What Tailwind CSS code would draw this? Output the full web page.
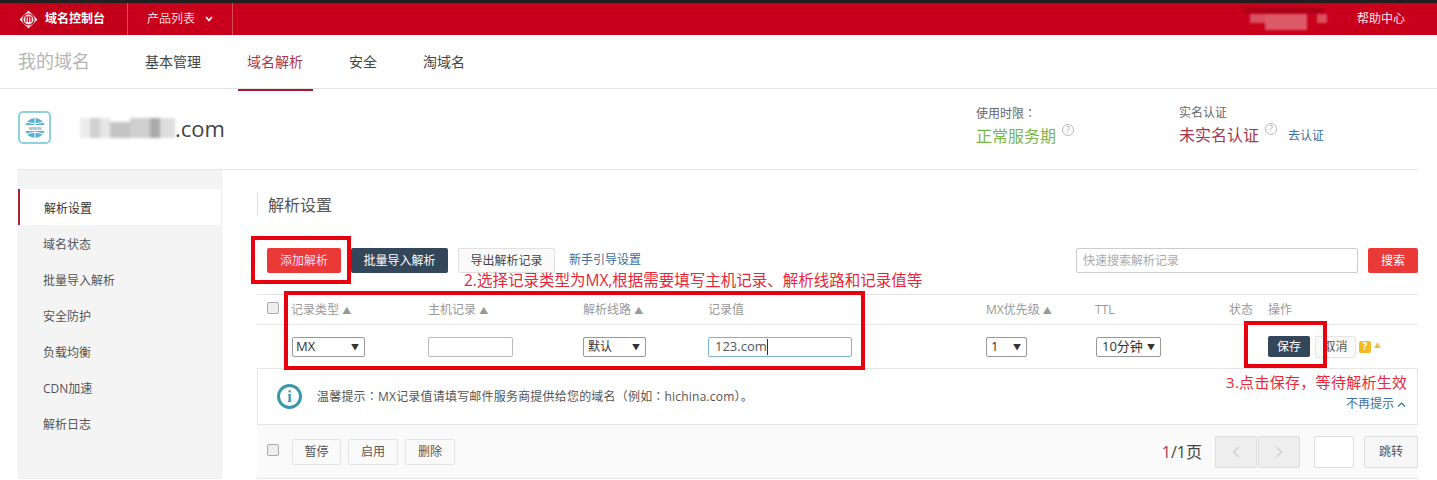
<!DOCTYPE html>
<html lang="en">
  <head>
    <meta charset="UTF-8" />
    <title>域名解析</title>
    <script src="https://cdn.jsdelivr.net/npm/@tailwindcss/browser@4"></script>
  </head>
  <body class="relative h-[480px] w-[1437px] overflow-hidden bg-white font-['Open_Sans','Noto_Sans_CJK_SC',sans-serif] text-[12px] text-[#555]">
    <!-- top bar -->
    <header class="flex h-[35px] border-t-[3px] border-[#231f20] bg-[#c9001c] text-white">
      <div class="ml-[18px] flex h-[32px] w-[109px] items-center gap-[7px] bg-[#c20019] pl-[1px] font-bold">
        <svg class="h-[19px] w-[19px]" viewBox="0 0 19 19">
          <path d="M9.5 0.5 18.5 9.5 9.5 18.5 0.5 9.5Z" fill="#f6e4e6" />
          <circle cx="9.5" cy="9.5" r="5.5" fill="#f6e4e6" stroke="#c20019" stroke-width="1.2" />
          <path d="M6.5 7h6M7 7v5M9.5 7v5M12 7v5" stroke="#c20019" stroke-width="1.2" fill="none" />
        </svg>
        <span class="text-[12px]">域名控制台</span>
      </div>
      <div class="flex w-[106px] items-center gap-[10px] border-x border-[#d9475a] pl-[19px] text-[#f7d5d9]">
        <span>产品列表</span>
        <svg class="h-[8px] w-[8px]" viewBox="0 0 8 8"><path d="M1 2 4 5.5 7 2" stroke="#fff" stroke-width="1.6" fill="none" /></svg>
      </div>
      <div class="ml-auto mr-[32px] flex items-center">
        <!-- blurred account name -->
        <div class="mr-[30px] flex h-[24px] w-[84px] items-start blur-[1px]">
          <div class="mt-[1px] h-[5px] w-[84px] bg-[#a80018]"></div>
          <div class="-ml-[74px] mt-[7px] h-[9px] w-[16px] bg-[#d9505f]"></div>
          <div class="mt-[7px] h-[16px] w-[44px] bg-[#dc5a68]"></div>
          <div class="ml-[10px] mt-[7px] h-[9px] w-[10px] bg-[#d9505f]"></div>
        </div>
        <span class="text-[#fbe3e6]">帮助中心</span>
      </div>
    </header>

    <!-- nav -->
    <nav class="flex h-[54px] items-center border-b border-[#e3e3e3] pl-[18px]">
      <span class="w-[127px] text-[18px] text-[#b5b5b5]">我的域名</span>
      <a class="text-[14px] text-[#444]">基本管理</a>
      <a class="relative ml-[46px] text-[14px] text-[#a8354c]">域名解析<span class="absolute -left-[9px] -bottom-[19px] h-[2px] w-[75px] bg-[#a8182f]"></span></a>
      <a class="ml-[46px] text-[14px] text-[#444]">安全</a>
      <a class="ml-[46px] text-[14px] text-[#444]">淘域名</a>
    </nav>

    <!-- domain info -->
    <section class="ml-[18px] mr-[19px] flex h-[81px] border-b border-[#e6e6e6]">
      <div class="mt-[22px] flex h-[33px] w-[33px] items-center justify-center rounded-[5px] border-2 border-[#8fd0e0]">
        <svg class="h-[22px] w-[22px]" viewBox="0 0 22 22">
          <circle cx="11" cy="11" r="10" fill="#5db0cf" />
          <path d="M11 1v20M3 5c5 2 11 2 16 0M3 17c5-2 11-2 16 0" stroke="#fff" stroke-width="1" fill="none" />
          <rect x="0" y="8" width="22" height="6" fill="#fff" />
          <text x="11" y="13" text-anchor="middle" font-size="6" font-family="Liberation Sans" fill="#3f8fae">www</text>
        </svg>
      </div>
      <div class="ml-[29px] mt-[26px] flex h-[26px] w-[145px] items-center">
        <!-- blurred domain name -->
        <div class="flex h-[20px] w-[95px] items-stretch blur-[1.5px]">
          <div class="w-[10px] bg-[#ececec]"></div>
          <div class="w-[10px] bg-[#d0d0d0]"></div>
          <div class="w-[10px] bg-[#e6e6e6]"></div>
          <div class="mt-[4px] w-[20px] bg-[#c4c4c4]"></div>
          <div class="w-[20px] bg-[#cfcfcf]"></div>
          <div class="w-[10px] bg-[#aaaaaa]"></div>
          <div class="w-[15px] bg-[#dddddd]"></div>
        </div>
        <span class="text-[22px] leading-none text-[#444]">.com</span>
      </div>
      <div class="ml-[751px] mt-[15px] w-[203px]">
        <p class="text-[12px] text-[#666]">使用时限<span class="font-['Noto_Sans_CJK_TC']">：</span></p>
        <p class="mt-[1px] flex items-start text-[16px] text-[#7ab648]">正常服务期<span class="ml-[6px] mt-0 flex h-[12px] w-[12px] items-center justify-center rounded-full border border-[#bbb] text-[9px] text-[#aaa]">?</span></p>
      </div>
      <div class="mt-[15px]">
        <p class="text-[12px] text-[#666]">实名认证</p>
        <p class="mt-[1px] flex items-start text-[16px] text-[#a8354c]">未实名认证<span class="ml-[6px] mt-0 flex h-[12px] w-[12px] items-center justify-center rounded-full border border-[#bbb] text-[9px] text-[#aaa]">?</span><a class="ml-[11px] mt-[4px] text-[12px] text-[#3b6e9e]">去认证</a></p>
      </div>
    </section>

    <div class="ml-[18px] mr-[19px] flex">
      <!-- sidebar -->
      <aside class="h-[309px] w-[204px] border-x border-b border-[#eee] bg-[#f4f4f4] pt-[19px]">
        <a class="-ml-px flex h-[36px] items-center border-l-2 border-[#b01e30] bg-white pl-[24px] pt-[4px] text-[#333]">解析设置</a>
        <a class="flex h-[36px] items-center pl-[24px] pt-[4px]">域名状态</a>
        <a class="flex h-[36px] items-center pl-[24px] pt-[4px]">批量导入解析</a>
        <a class="flex h-[36px] items-center pl-[24px] pt-[4px]">安全防护</a>
        <a class="flex h-[36px] items-center pl-[24px] pt-[4px]">负载均衡</a>
        <a class="flex h-[36px] items-center pl-[24px] pt-[4px]">CDN加速</a>
        <a class="flex h-[36px] items-center pl-[24px] pt-[4px]">解析日志</a>
      </aside>

      <!-- main -->
      <main class="flex-1 pl-[35px]">
        <h2 class="mt-[23px] h-[22px] border-l border-[#ddd] pl-[10px] text-[16px] leading-[24px] text-[#555]">解析设置</h2>

        <div class="mt-[33px] flex h-[25px] items-center">
          <button class="ml-[10px] h-[25px] w-[74px] rounded-[2px] bg-[#e93a37] text-[#fde]">添加解析</button>
          <button class="ml-[10px] h-[25px] w-[97px] rounded-[2px] bg-[#34465a] text-white">批量导入解析</button>
          <button class="ml-[10px] h-[25px] w-[97px] rounded-[2px] border border-[#e0e0e0] bg-[#fafafa] text-[#444]">导出解析记录</button>
          <a class="ml-[14px] -mt-[2px] text-[#3b6e9e]">新手引导设置</a>
          <div class="ml-auto flex h-[25px] w-[282px] items-center rounded-[2px] border border-[#ccc] pl-[6px] text-[#aaa]">快速搜索解析记录</div>
          <button class="ml-[10px] h-[25px] w-[50px] rounded-[2px] bg-[#e93a37] text-white">搜索</button>
        </div>

        <!-- table -->
        <div class="mt-[21px] flex h-[31px] items-center border-y border-[#e6e6e6] text-[12px] text-[#999]">
          <input type="checkbox" class="ml-[10px] -mt-[3px] h-[12px] w-[12px] appearance-none rounded-[2px] border border-[#aaa] bg-[#eee]" />
          <span class="ml-[12px] w-[137px]">记录类型 <span class="text-[9px]">▲</span></span>
          <span class="w-[155px]">主机记录 <span class="text-[9px]">▲</span></span>
          <span class="w-[125px]">解析线路 <span class="text-[9px]">▲</span></span>
          <span class="w-[278px]">记录值</span>
          <span class="w-[109px]">MX优先级 <span class="text-[9px]">▲</span></span>
          <span class="w-[134px]">TTL</span>
          <span class="w-[39px]">状态</span>
          <span>操作</span>
        </div>
        <div class="flex h-[44px] items-center border-b border-[#e6e6e6] text-[#333]">
          <div class="ml-[35px] flex h-[20px] w-[73px] items-center justify-between rounded-[2px] border border-[#999] pl-[3px] pr-[5px] text-[13px]">MX<span class="text-[8px]">▼</span></div>
          <div class="ml-[63px] h-[20px] w-[85px] rounded-[2px] border border-[#bbb]"></div>
          <div class="ml-[70px] flex h-[20px] w-[63px] items-center justify-between rounded-[2px] border border-[#999] pl-[4px] pr-[5px]">默认<span class="text-[8px]">▼</span></div>
          <div class="ml-[62px] flex h-[20px] w-[144px] items-center rounded-[2px] border border-[#7fb2d6] pl-[6px] text-[13px] text-[#555]">123.com<span class="h-[16px] w-px bg-[#333]"></span></div>
          <div class="ml-[134px] flex h-[20px] w-[41px] items-center justify-between rounded-[2px] border border-[#999] pl-[4px] pr-[5px] text-[13px]">1<span class="text-[8px]">▼</span></div>
          <div class="ml-[69px] flex h-[20px] w-[65px] items-center justify-between rounded-[2px] border border-[#999] px-[5px] text-[13px]">10分钟<span class="text-[8px]">▼</span></div>
          <button class="ml-[107px] h-[21px] w-[42px] rounded-[2px] bg-[#34465a] text-white">保存</button>
          <button class="ml-[5px] h-[22px] w-[41px] rounded-[2px] border border-[#e5e5e5] bg-[#fafafa] text-[#555]">取消</button>
          <span class="ml-[3px] flex h-[12px] w-[12px] items-center justify-center rounded-[2px] bg-[#f5b921] text-[10px] font-bold text-white">?</span>
          <span class="ml-[3px] text-[7px] text-[#e8c04a]">▲</span>
        </div>

        <!-- tip -->
        <div class="relative flex h-[56px] items-center border-x border-b border-[#e6e6e6] pl-[19px]">
          <span class="flex h-[25px] w-[25px] items-center justify-center rounded-full border-[3px] border-[#3a97ab] font-['Liberation_Serif'] text-[16px] font-bold text-[#3a97ab]">i</span>
          <span class="ml-[15px] tracking-[0.2px] text-[#555]">温馨提示<span class="font-['Noto_Sans_CJK_TC']">：</span>MX记录值请填写邮件服务商提供给您的域名（例如<span class="font-['Noto_Sans_CJK_TC']">：</span>hichina.com）。</span>
          <a class="absolute right-[11px] bottom-[11px] flex items-center gap-[3px] text-[#3b6e9e]">不再提示<svg class="h-[7px] w-[9px]" viewBox="0 0 9 7"><path d="M1 5.5 4.5 2 8 5.5" stroke="#3b6e9e" stroke-width="1.2" fill="none" /></svg></a>
        </div>

        <!-- footer bar -->
        <div class="flex h-[54px] items-center border-b border-[#e6e6e6] bg-[#fafafa] text-[#555]">
          <input type="checkbox" class="ml-[10px] -mt-[3px] h-[12px] w-[12px] appearance-none rounded-[2px] border border-[#aaa] bg-[#eee]" />
          <button class="ml-[13px] h-[26px] w-[49px] rounded-[2px] border border-[#e5e5e5]">暂停</button>
          <button class="ml-[7px] h-[26px] w-[50px] rounded-[2px] border border-[#e5e5e5]">启用</button>
          <button class="ml-[7px] h-[26px] w-[50px] rounded-[2px] border border-[#e5e5e5]">删除</button>
          <span class="ml-auto text-[16px] text-[#444]"><span class="text-[#a8354c]">1</span>/1页</span>
          <button class="ml-[13px] flex h-[32px] w-[42px] items-center justify-center rounded-[2px] border border-[#ddd] bg-[#eee]"><svg class="h-[12px] w-[8px]" viewBox="0 0 8 12"><path d="M6.5 1 1.5 6 6.5 11" stroke="#ccc" stroke-width="1.2" fill="none" /></svg></button>
          <button class="ml-[1px] flex h-[32px] w-[42px] items-center justify-center rounded-[2px] border border-[#ddd] bg-[#eee]"><svg class="h-[12px] w-[8px]" viewBox="0 0 8 12"><path d="M1.5 1 6.5 6 1.5 11" stroke="#ccc" stroke-width="1.2" fill="none" /></svg></button>
          <div class="ml-[14px] h-[32px] w-[40px] rounded-[2px] border border-[#ddd] bg-white"></div>
          <button class="ml-[10px] h-[32px] w-[54px] rounded-[2px] border border-[#ddd] bg-[#f7f7f7]">跳转</button>
        </div>
      </main>
    </div>

    <!-- red annotations drawn over the page -->
    <div class="absolute left-[251px] top-[236px] h-[48px] w-[100px] border-[4px] border-[#e8000d]"></div>
    <div class="absolute left-[284px] top-[291px] h-[79px] w-[581px] border-[4px] border-[#e8000d]"></div>
    <div class="absolute left-[1244px] top-[321px] h-[47px] w-[83px] border-[4px] border-[#e8000d]"></div>
    <p class="absolute left-[464px] top-[269px] text-[15.5px] text-[#e5283a]">2.选择记录类型为MX,根据需要填写主机记录、解析线路和记录值等</p>
    <p class="absolute left-[1226px] top-[371px] tracking-[0.3px] text-[15px] text-[#e5283a]">3.点击保存，等待解析生效</p>
  </body>
</html>
